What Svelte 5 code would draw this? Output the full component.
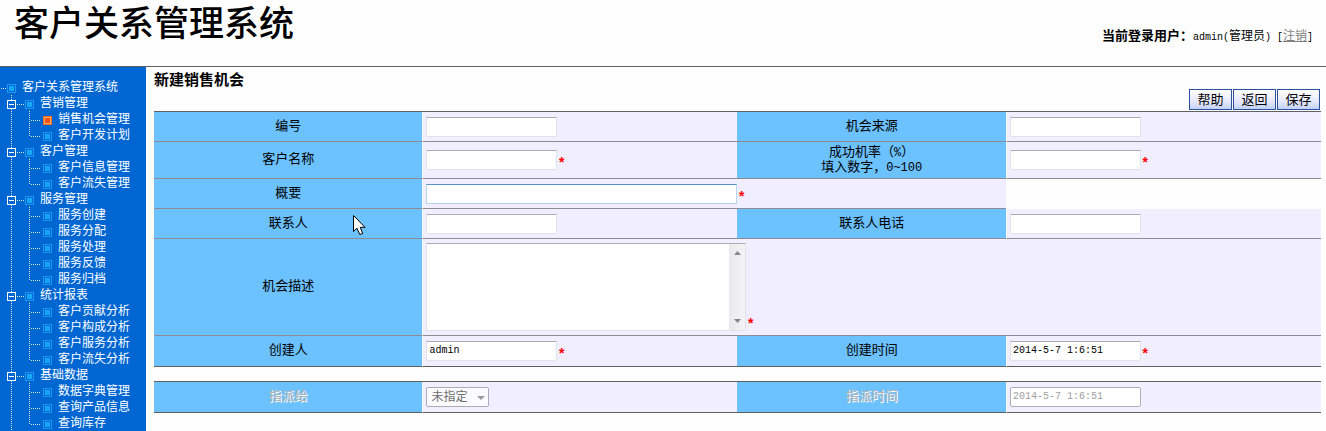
<script>
  let groups = [
    { name: '营销管理', open: true, items: ['销售机会管理', '客户开发计划'] },
    { name: '客户管理', open: true, items: ['客户信息管理', '客户流失管理'] },
    { name: '服务管理', open: true, items: ['服务创建', '服务分配', '服务处理', '服务反馈', '服务归档'] },
    { name: '统计报表', open: true, items: ['客户贡献分析', '客户构成分析', '客户服务分析', '客户流失分析'] },
    { name: '基础数据', open: true, items: ['数据字典管理', '查询产品信息', '查询库存'] }
  ];

  let current = '销售机会管理';

  let chance = {
    id: '',
    source: '',
    customer: '',
    rate: '',
    title: '',
    linkman: '',
    tel: '',
    description: '',
    creator: 'admin',
    createDate: '2014-5-7 1:6:51',
    dueDate: '2014-5-7 1:6:51'
  };

  function toggle(group) {
    group.open = !group.open;
    groups = groups;
  }
</script>

{#snippet node(x, active)}
  <g class="node" class:active>
    <rect class="ring" x={x + 0.5} y="5.5" width="8" height="8" />
    <rect class="dot" x={x + 2} y="7" width="5" height="5" />
  </g>
{/snippet}

<div class="page">
  <header>
    <h1>客户关系管理系统</h1>
    <p class="user">
      <b>当前登录用户：</b><span class="latin">admin(</span>管理员<span class="latin">) [</span><a href="#logout">注销</a><span class="latin">]</span>
    </p>
  </header>

  <div class="body">
    <nav>
      <ul>
        <li class="row">
          <svg width="22" height="16">
            <path class="guide" d="M1 9.5H6" />
            {@render node(7, false)}
          </svg>
          <a href="#home">客户关系管理系统</a>
        </li>
        {#each groups as group}
          <li>
            <div class="row">
              <button class="toggle" aria-label={group.name} aria-expanded={group.open} on:click={() => toggle(group)}>
                <svg width="40" height="16">
                  <path class="guide" d="M11.5 0V16M17 9.5H24" />
                  <rect class="box" x="7.5" y="5.5" width="8" height="8" />
                  <path class="sign" d={group.open ? 'M9 9.5H14' : 'M9 9.5H14M11.5 7V12'} />
                  {@render node(25, false)}
                </svg>
              </button>
              <a href="#{group.name}">{group.name}</a>
            </div>
            {#if group.open}
              <ul>
                {#each group.items as item, i}
                  <li class="row">
                    <svg width="58" height="16">
                      <path class="guide" d="M11.5 0V16M29.5 0V{i === group.items.length - 1 ? 10 : 16}M31 9.5H41" />
                      {@render node(43, item === current)}
                    </svg>
                    <a href="#{item}" on:click={() => (current = item)}>{item}</a>
                  </li>
                {/each}
              </ul>
            {/if}
          </li>
        {/each}
      </ul>
    </nav>

    <main>
      <h2>新建销售机会</h2>
      <div class="buttons">
        <button>帮助</button>
        <button>返回</button>
        <button>保存</button>
      </div>

      <table>
        <tbody>
          <tr>
            <th><label for="id">编号</label></th>
            <td><div class="field"><input id="id" bind:value={chance.id} /></div></td>
            <th><label for="source">机会来源</label></th>
            <td><div class="field"><input id="source" bind:value={chance.source} /></div></td>
          </tr>
          <tr class="tall">
            <th><label for="customer">客户名称</label></th>
            <td><div class="field"><input id="customer" bind:value={chance.customer} /><span class="required">*</span></div></td>
            <th><label for="rate">成功机率（<span class="num">%</span>）<br />填入数字，<span class="num">0~100</span></label></th>
            <td><div class="field"><input id="rate" bind:value={chance.rate} /><span class="required">*</span></div></td>
          </tr>
          <tr>
            <th><label for="title">概要</label></th>
            <td colspan="2"><div class="field"><input id="title" class="wide" bind:value={chance.title} /><span class="required">*</span></div></td>
          </tr>
          <tr>
            <th><label for="linkman">联系人</label></th>
            <td><div class="field"><input id="linkman" bind:value={chance.linkman} /></div></td>
            <th><label for="tel">联系人电话</label></th>
            <td><div class="field"><input id="tel" bind:value={chance.tel} /></div></td>
          </tr>
          <tr class="memo">
            <th><label for="description">机会描述</label></th>
            <td colspan="3">
              <div class="field">
                <div class="textbox">
                  <textarea id="description" bind:value={chance.description}></textarea>
                  <div class="scroll">
                    <svg width="7" height="4"><path d="M0 4L3.500 0L7 4Z" /></svg>
                    <svg width="7" height="4"><path d="M0 0L3.500 4L7 0Z" /></svg>
                  </div>
                </div>
                <span class="required">*</span>
              </div>
            </td>
          </tr>
          <tr>
            <th><label for="creator">创建人</label></th>
            <td><div class="field"><input id="creator" bind:value={chance.creator} /><span class="required">*</span></div></td>
            <th><label for="create-date">创建时间</label></th>
            <td><div class="field"><input id="create-date" bind:value={chance.createDate} /><span class="required">*</span></div></td>
          </tr>
        </tbody>
      </table>

      <table class="disabled">
        <tbody>
          <tr>
            <th><label for="due-to">指派给</label></th>
            <td>
              <div class="field">
                <span class="select">
                  <select id="due-to" disabled>
                    <option>未指定</option>
                  </select>
                  <svg width="8" height="4"><path d="M0 0H8L4 4Z" /></svg>
                </span>
              </div>
            </td>
            <th><label for="due-date">指派时间</label></th>
            <td><div class="field"><input id="due-date" value={chance.dueDate} disabled /></div></td>
          </tr>
        </tbody>
      </table>
    </main>
  </div>

  <svg class="pointer" width="13" height="21" viewBox="0 0 13 21">
    <path d="M0.500 0.500V16.500L4 13.200L6.800 19.500L9.700 18.500L7.200 12.300H12Z" />
  </svg>
</div>

<style>
  :global(body) {
    margin: 0;
    background: #fefefe;
  }

  .page {
    position: relative;
    min-height: 100vh;
    display: flex;
    flex-direction: column;
    font-family: 'Noto Sans CJK SC', sans-serif;
    font-size: 12px;
    color: #000;
  }

  header {
    display: flex;
    justify-content: space-between;
    align-items: flex-start;
    height: 66px;
    padding: 0 13px 0 14px;
    border-bottom: 1px solid #606060;
  }

  h1 {
    margin: 0;
    font-family: 'Liberation Sans', 'Noto Sans CJK SC', sans-serif;
    font-size: 35px;
    line-height: 48px;
    font-weight: 500;
  }

  .user {
    margin: 27px 0 0;
    line-height: 16px;
    white-space: pre;
  }

  .user b {
    font-size: 13px;
  }

  .user a {
    color: #808080;
  }

  .latin,
  .num {
    font-family: 'Liberation Mono', monospace;
    font-size: 10px;
    line-height: 1;
  }

  .num {
    font-size: 12px;
  }

  .body {
    display: flex;
    flex: 1;
  }

  nav {
    flex: none;
    width: 146px;
    padding-top: 12px;
    box-sizing: border-box;
    background: #0066d2;
  }

  ul {
    list-style: none;
    margin: 0;
    padding: 0;
  }

  .row {
    display: flex;
    height: 16px;
  }

  .row svg {
    display: block;
    flex: none;
  }

  .row a {
    color: #fff;
    text-decoration: none;
    line-height: 14px;
    white-space: nowrap;
  }

  .toggle {
    padding: 0;
    border: 0;
    background: none;
    cursor: pointer;
  }

  .guide {
    stroke: #cfe6ff;
    stroke-dasharray: 1 1;
    fill: none;
  }

  .box {
    fill: #0066d2;
    stroke: #fff;
  }

  .sign {
    stroke: #fff;
  }

  .ring {
    fill: #0066d2;
    stroke: #1a98ee;
  }

  .dot {
    fill: #12a8fa;
  }

  .active .ring {
    fill: #ffb060;
    stroke: #f0641e;
  }

  .active .dot {
    fill: #ff5010;
  }

  main {
    flex: 1;
    min-width: 0;
    padding: 0 5px 0 8px;
  }

  h2 {
    margin: 0;
    font-size: 15px;
    line-height: 24px;
    height: 22px;
  }

  .buttons {
    display: flex;
    justify-content: flex-end;
    gap: 1px;
    padding: 0 1px 1px 0;
  }

  .buttons button {
    width: 43px;
    height: 21px;
    padding: 0 0 2px;
    border: 1px solid #2c50a0;
    background: linear-gradient(#fff, #e6e8fc 60%, #c2d2fa);
    font-family: inherit;
    font-size: 13px;
    line-height: 17px;
    color: #000;
  }

  table {
    width: 100%;
    table-layout: fixed;
    border-collapse: separate;
    border-spacing: 0;
    border-top: 1px solid #606060;
  }

  th,
  td {
    padding: 0;
    height: 29px;
    border-bottom: 1px solid #8c8c92;
  }

  tr:last-child th,
  tr:last-child td {
    height: 30px;
    border-bottom-color: #606060;
  }

  th {
    width: 23%;
    background: #6cc1ff;
    font-family: 'Liberation Sans', 'Noto Sans CJK SC', sans-serif;
    font-size: 13px;
    font-weight: 400;
    line-height: 15px;
    text-align: center;
  }

  th label {
    display: block;
    padding-bottom: 3px;
  }

  td {
    width: 27%;
    background: #f0eeff;
    border-left: 1px solid #f8f8ff;
    box-sizing: border-box;
  }

  .tall th,
  .tall td {
    height: 36px;
  }

  .memo th,
  .memo td {
    height: 96px;
  }

  .disabled {
    margin-top: 14px;
  }

  .disabled th {
    color: #b4b4b4;
    text-shadow: 1px 1px #fff;
  }

  .field {
    display: flex;
    align-items: flex-end;
    padding-left: 3px;
  }

  input {
    width: 131px;
    height: 20px;
    box-sizing: border-box;
    padding: 0 2px 1px;
    border: 1px solid #e2e3ea;
    border-top-color: #abadb3;
    border-radius: 1px;
    background: #fff;
    font-family: 'Liberation Mono', 'Noto Sans CJK SC', monospace;
    font-size: 10px;
    color: #000;
    outline: none;
  }

  .wide {
    width: 311px;
    border-color: #b7d4ea;
    border-top-color: #5a8fc4;
  }

  .required {
    color: #f00;
    font-family: 'Liberation Mono', monospace;
    font-size: 14px;
    font-weight: 700;
    line-height: 12px;
  }

  .textbox {
    display: flex;
    width: 320px;
    height: 88px;
    box-sizing: border-box;
    border: 1px solid #e2e3ea;
    border-top-color: #abadb3;
    background: #fff;
  }

  textarea {
    flex: 1;
    min-width: 0;
    padding: 2px;
    border: 0;
    outline: none;
    resize: none;
    overflow: hidden;
    background: #fff;
    font-family: inherit;
    font-size: 12px;
  }

  .scroll {
    display: flex;
    flex-direction: column;
    justify-content: space-between;
    align-items: center;
    width: 16px;
    box-sizing: border-box;
    padding: 7px 0;
    background: linear-gradient(90deg, #e9e9ec, #f4f3f6);
  }

  .scroll path {
    fill: #86868c;
  }

  .select {
    position: relative;
    display: flex;
  }

  select {
    appearance: none;
    width: 63px;
    height: 20px;
    box-sizing: border-box;
    padding: 0 4px 2px;
    border: 1px solid #acacb4;
    border-radius: 2px;
    background: #fbfbff;
    font-family: inherit;
    font-size: 12px;
    line-height: 16px;
    opacity: 1;
  }

  select:disabled {
    color: #6d6d6d;
  }

  .select svg {
    position: absolute;
    right: 4px;
    top: 9px;
    fill: #9a9aa2;
  }

  input:disabled {
    border-color: #afafb4;
    border-radius: 2px;
    color: #a0a0a0;
  }

  .pointer {
    position: absolute;
    left: 353px;
    top: 215px;
    fill: #fff;
    stroke: #000;
    pointer-events: none;
  }
</style>
